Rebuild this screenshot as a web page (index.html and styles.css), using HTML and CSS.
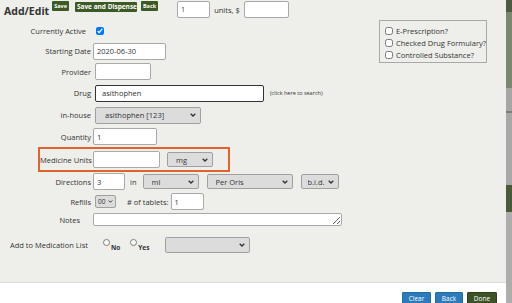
FILE: index.html
```html
<!DOCTYPE html>
<html lang="en">
<head>
    <meta charset="UTF-8">
    <title>Add/Edit Prescription</title>
    <link rel="stylesheet" href="styles.css">
</head>
<body>
    <div class="page">
        <div class="panel">
            <!-- Header -->
            <div class="header">
                <h2>Add/Edit</h2>
                <button class="btn-top">Save</button>
                <button class="btn-top btn-wide">Save and Dispense</button>
                <button class="btn-top btn-back">Back</button>
                <input type="text" class="qty" value="1" />
                <span class="units">units, $</span>
                <input type="text" class="price" />
            </div>

            <div class="content">
                <div class="fields">
                    <div class="row h20">
                        <span class="label label-active">Currently Active</span>
                        <input type="checkbox" class="check" checked />
                    </div>
                    <div class="row h20">
                        <span class="label">Starting Date</span>
                        <input type="text" class="date" value="2020-06-30" />
                    </div>
                    <div class="row h21">
                        <span class="label">Provider</span>
                        <input type="text" class="provider" />
                    </div>
                    <div class="row h22">
                        <span class="label">Drug</span>
                        <input type="text" class="drug" value="asithophen" />
                        <span class="hint">(click here to search)</span>
                    </div>
                    <div class="row h22">
                        <span class="label">in-house</span>
                        <select class="inhouse"><option>asithophen [123]</option></select>
                    </div>
                    <div class="row h21">
                        <span class="label">Quantity</span>
                        <input type="text" class="quantity" value="1" />
                    </div>
                    <div class="row highlight">
                        <span class="label label-units">Medicine Units</span>
                        <input type="text" class="med-units" />
                        <select class="unit-select"><option>mg</option></select>
                    </div>
                    <div class="row h19">
                        <span class="label">Directions</span>
                        <input type="text" class="dose" value="3" />
                        <span class="in">in</span>
                        <select class="form-select"><option>ml</option></select>
                        <select class="route-select"><option>Per Oris</option></select>
                        <select class="freq-select"><option>b.i.d.</option></select>
                    </div>
                    <div class="row h21">
                        <span class="label">Refills</span>
                        <select class="refills"><option>00</option></select>
                        <span class="tablets">&#35; of tablets:</span>
                        <input type="text" class="tablet-count" value="1" />
                    </div>
                    <div class="row h15">
                        <span class="label label-notes">Notes</span>
                        <textarea class="notes"></textarea>
                    </div>
                    <div class="row h18 list-row">
                        <span class="label label-list">Add to Medication List</span>
                        <input type="radio" name="medlist" class="radio" />
                        <b class="radio-text">No</b>
                        <input type="radio" name="medlist" class="radio radio-yes" />
                        <b class="radio-text">Yes</b>
                        <select class="list-select"><option></option></select>
                    </div>
                </div>

                <fieldset class="flags">
                    <label><input type="checkbox" /> E-Prescription?</label>
                    <label><input type="checkbox" /> Checked Drug Formulary?</label>
                    <label><input type="checkbox" /> Controlled Substance?</label>
                </fieldset>
            </div>
        </div>

        <!-- Footer actions -->
        <div class="footer">
            <button class="btn-foot btn-blue">Clear</button>
            <button class="btn-foot btn-blue btn-narrow">Back</button>
            <button class="btn-foot btn-green">Done</button>
        </div>
    </div>
</body>
</html>
```

FILE: styles.css
```css
* {
    box-sizing: border-box;
}
body {
    margin: 0;
    height: 303px;
    overflow: hidden;
    font-family: "Open Sans", Lato, sans-serif;
    font-size: 7.5px;
    color: #333;
    background: linear-gradient(to bottom,
        #4f5a45 0, #4f5a45 12px,
        #7b866f 12px, #7b866f 88px,
        #a6a6a4 88px, #a6a6a4 111px,
        #7d7d7d 111px, #7d7d7d 113px,
        #a8a8a6 113px, #a8a8a6 185px,
        #4a5938 185px, #4a5938 212px,
        #adadab 212px);
}
.page {
    width: 506px;
    height: 303px;
    display: flex;
    flex-direction: column;
}
.panel {
    background-color: #eeefea;
    height: 282px;
    flex: none;
}
input, select, textarea, button {
    font-family: inherit;
    font-size: 7.5px;
    color: #333;
    margin: 0;
}
input[type="text"], textarea {
    background: #fff;
    border: 1px solid #a9a9a9;
    border-radius: 2px;
    padding: 0 3px;
    height: 17px;
}
select {
    -webkit-appearance: none;
    appearance: none;
    background-color: #dcdcdc;
    background-image: url("data:image/svg+xml,%3Csvg xmlns='http://www.w3.org/2000/svg' width='6' height='4' viewBox='0 0 6 4'%3E%3Cpath d='M0.7 0.7 L3 3 L5.3 0.7' fill='none' stroke='%23333' stroke-width='1.3'/%3E%3C/svg%3E");
    background-repeat: no-repeat;
    background-position: right 4px center;
    background-size: 6px 4px;
    border: 1px solid #a0a0a0;
    border-radius: 2px;
    height: 15px;
    padding: 0 0 0 6px;
}

/* Header */
.header {
    display: flex;
    align-items: flex-start;
    height: 20px;
}
.header h2 {
    margin: 5px 0 0 4px;
    font-size: 10.5px;
    line-height: 12px;
    font-weight: bold;
    color: #333;
}
.btn-top {
    margin: 1px 0 0 3px;
    height: 10px;
    padding: 0 2px;
    border: none;
    border-radius: 1px;
    background-color: #3d5a24;
    color: #fff;
    font-size: 5.5px;
    font-weight: bold;
    line-height: 10px;
    white-space: nowrap;
}
.btn-wide {
    margin: 2px 0 0 6px;
    width: 62px;
    font-size: 6.5px;
}
.btn-back {
    margin-left: 4px;
}
.header .qty {
    margin: 1px 0 0 19px;
    width: 33px;
    font-size: 6.5px;
}
.units {
    margin: 5px 4px 0 4px;
}
.header .price {
    margin-top: 1px;
    width: 45px;
}

/* Form */
.content {
    display: flex;
    align-items: flex-start;
}
.fields {
    padding-top: 1px;
    width: 360px;
}
.row {
    display: flex;
    align-items: center;
}
.h15 { height: 15px; }
.h18 { height: 18px; }
.h19 { height: 19px; }
.h20 { height: 20px; }
.h21 { height: 21px; }
.h22 { height: 22px; }
.label {
    width: 91px;
    flex: none;
    text-align: right;
    white-space: nowrap;
}
.label-active {
    padding-right: 5px;
}
.check {
    margin: 0 0 0 5px;
    width: 8px;
    height: 8px;
}
.date {
    margin-left: 2px;
    width: 73px;
}
.provider {
    margin-left: 4px;
    width: 56px;
}
.fields .drug {
    margin-left: 4px;
    width: 169px;
    border-color: #333;
    padding-left: 6px;
}
.hint {
    margin-left: 6px;
    font-size: 5.5px;
}
.inhouse {
    margin-left: 4px;
    width: 106px;
    height: 17px;
    padding-left: 9px;
}
.quantity {
    margin-left: 2px;
    width: 64px;
}
.highlight {
    margin-left: 38px;
    width: 192px;
    height: 25px;
    border: 2px solid #e2622b;
}
.label-units {
    width: 51px;
}
.med-units {
    margin-left: 2px;
    width: 67px;
}
.unit-select {
    margin-left: 7px;
    width: 46px;
    padding-left: 8px;
}
.dose {
    margin-left: 2px;
    width: 32px;
}
.in {
    margin: 0 6px 0 5px;
}
.form-select {
    width: 56px;
    padding-left: 8px;
}
.route-select {
    margin-left: 8px;
    width: 86px;
    padding-left: 8px;
}
.freq-select {
    margin-left: 8px;
    width: 38px;
}
.refills {
    margin-left: 4px;
    width: 21px;
    height: 13px;
    padding-left: 2px;
    font-size: 6.5px;
    background-position: right 2px center;
    background-size: 5px 3px;
}
.tablets {
    margin-left: 11px;
}
.tablet-count {
    margin-left: 2px;
    width: 33px;
}
.label-notes {
    padding-right: 11px;
}
.fields .notes {
    margin-left: 2px;
    width: 249px;
    height: 13px;
}
.list-row {
    margin-top: 9px;
}
.label-list {
    text-align: left;
    padding-left: 10px;
}
.radio {
    margin: 0 0 5px 12px;
    width: 7px;
    height: 7px;
}
.radio-yes {
    margin-left: 10px;
}
.radio-text {
    margin: 5px 0 0 1px;
    font-size: 6.5px;
}
.list-select {
    margin-left: 16px;
    width: 85px;
    height: 16px;
}

/* Checkbox group on the right */
.flags {
    margin: 0 19px 0 auto;
    width: 107px;
    height: 43px;
    border: 1px solid #a9a9a9;
    padding: 4px 0 0 5px;
    display: flex;
    flex-direction: column;
}
.flags label {
    display: flex;
    align-items: center;
    height: 12px;
    white-space: nowrap;
}
.flags input {
    margin: 0 3px 0 0;
    width: 8px;
    height: 8px;
}

/* Footer */
.footer {
    flex: 1;
    background: #fff;
    border-top: 1px solid #dcdcdc;
    display: flex;
    justify-content: flex-end;
    align-items: flex-start;
    gap: 4px;
    padding: 9px 9px 0 0;
}
.btn-foot {
    width: 29px;
    height: 14px;
    padding: 0;
    border-radius: 1px;
    color: #fff;
    font-size: 6.5px;
    line-height: 12px;
}
.btn-narrow {
    width: 28px;
}
.btn-foot.btn-green {
    width: 30px;
}
.btn-blue {
    background-color: #2b7bba;
    border: 1px solid #246aa3;
}
.btn-green {
    background-color: #3d5325;
    border: 1px solid #2f411c;
}
```
